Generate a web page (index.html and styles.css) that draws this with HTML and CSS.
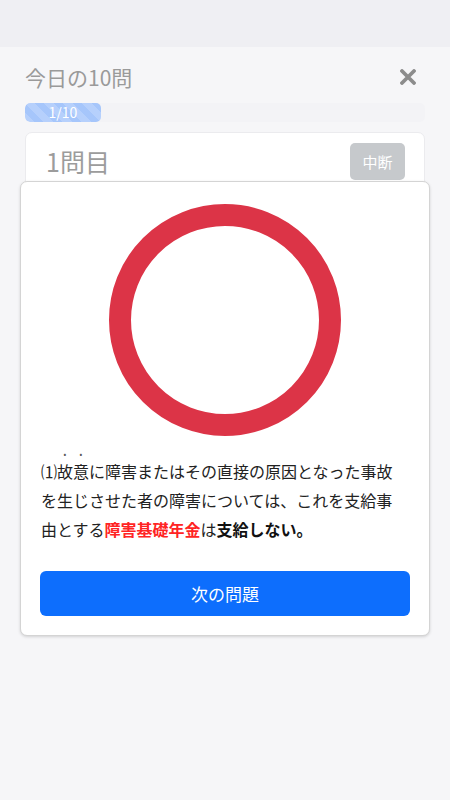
FILE: index.html
```html
<!DOCTYPE html>
<html lang="ja">
<head>
    <meta charset="UTF-8">
    <meta name="viewport" content="width=device-width, initial-scale=1.0">
    <title>今日の10問</title>
    <link rel="stylesheet" href="styles.css">
</head>
<body>
    <div class="statusbar"></div>

    <main class="page">
        <div class="quiz-head">
            <h1>今日の10問</h1>
            <button class="close-btn" aria-label="閉じる">
                <svg width="16" height="16" viewBox="0 0 16 16">
                    <path d="M2 2 L14 14 M14 2 L2 14" stroke="#8c8c8c" stroke-width="3.8" stroke-linecap="round"/>
                </svg>
            </button>
        </div>

        <div class="progress">
            <div class="progress-bar" style="width: 19%;">1/10</div>
        </div>

        <div class="question-card">
            <h2>1問目</h2>
            <button class="stop-btn">中断</button>
        </div>
    </main>

    <!-- 正解ポップアップ -->
    <div class="result">
        <svg class="mark" width="232" height="232" viewBox="0 0 232 232">
            <circle cx="116" cy="116" r="105" fill="none" stroke="#dc3447" stroke-width="22"/>
        </svg>
        <p class="explain"><span>⑴</span><em>故意</em>に障害またはその直接の原因となった事故を生じさせた者の障害については、これを支給事由とする<strong class="red">障害基礎年金</strong>は<strong>支給しない。</strong></p>
        <button class="next-btn">次の問題</button>
    </div>
</body>
</html>
```

FILE: styles.css
```css
body {
    margin: 0;
    font-family: "Noto Sans CJK JP", "Noto Sans", sans-serif;
    background: #f6f6f8;
    color: #222;
    height: 800px;
    overflow: hidden;
}

.statusbar {
    height: 47px;
    background: #efeff3;
}

.page {
    padding: 0 25px;
}

.quiz-head {
    display: flex;
    align-items: center;
    justify-content: space-between;
    padding-top: 18px;
}

.quiz-head h1 {
    margin: 0;
    font-size: 21px;
    line-height: 24px;
    font-weight: normal;
    color: #9a9a9a;
}

.close-btn {
    background: none;
    border: none;
    padding: 0;
    margin-right: 9px;
    width: 16px;
    height: 16px;
    display: flex;
}

.progress {
    margin-top: 14px;
    height: 19px;
    border-radius: 5px;
    background: #f3f3f6;
    overflow: hidden;
}

.progress-bar {
    height: 100%;
    border-radius: 5px;
    background-color: #a6c6fb;
    background-image: linear-gradient(45deg, rgba(255, 255, 255, 0.18) 25%, transparent 25%, transparent 50%, rgba(255, 255, 255, 0.18) 50%, rgba(255, 255, 255, 0.18) 75%, transparent 75%, transparent);
    background-size: 19px 19px;
    color: #fff;
    font-size: 14px;
    line-height: 19px;
    text-align: center;
}

.question-card {
    margin-top: 10px;
    background: #fff;
    border: 1px solid #ebebee;
    border-radius: 7px;
    padding: 10px 19px 10px 20px;
    height: 120px;
    display: flex;
    align-items: flex-start;
    justify-content: space-between;
}

.question-card h2 {
    margin: 0;
    font-size: 25px;
    line-height: 37px;
    font-weight: normal;
    color: #9c9c9c;
}

.stop-btn {
    width: 55px;
    height: 37px;
    border: none;
    border-radius: 5px;
    background: #c6c9cc;
    color: #fff;
    font-family: inherit;
    font-size: 15px;
    padding: 0;
}

/* 正解ポップアップ */
.result {
    position: absolute;
    top: 181px;
    left: 20px;
    width: 410px;
    box-sizing: border-box;
    background: #fff;
    border: 1px solid #d4d4d4;
    border-radius: 7px;
    box-shadow: 0 1px 3px rgba(0, 0, 0, 0.15);
    padding: 22px 19px 19px 19px;
    display: flex;
    flex-direction: column;
    align-items: center;
}

.mark {
    display: block;
}

.explain {
    align-self: stretch;
    margin: 12px 6px 0 1px;
    font-size: 16px;
    line-height: 29px;
    color: #222;
}

.explain em {
    font-style: normal;
    text-emphasis: filled dot;
    -webkit-text-emphasis: filled dot;
    text-emphasis-color: #555;
}

.explain strong {
    color: #111;
}

.explain .red {
    color: #ff2424;
}

.next-btn {
    align-self: stretch;
    margin-top: 27px;
    height: 45px;
    border: none;
    border-radius: 6px;
    background: #0d6efd;
    color: #fff;
    font-family: inherit;
    font-size: 17px;
}
```
